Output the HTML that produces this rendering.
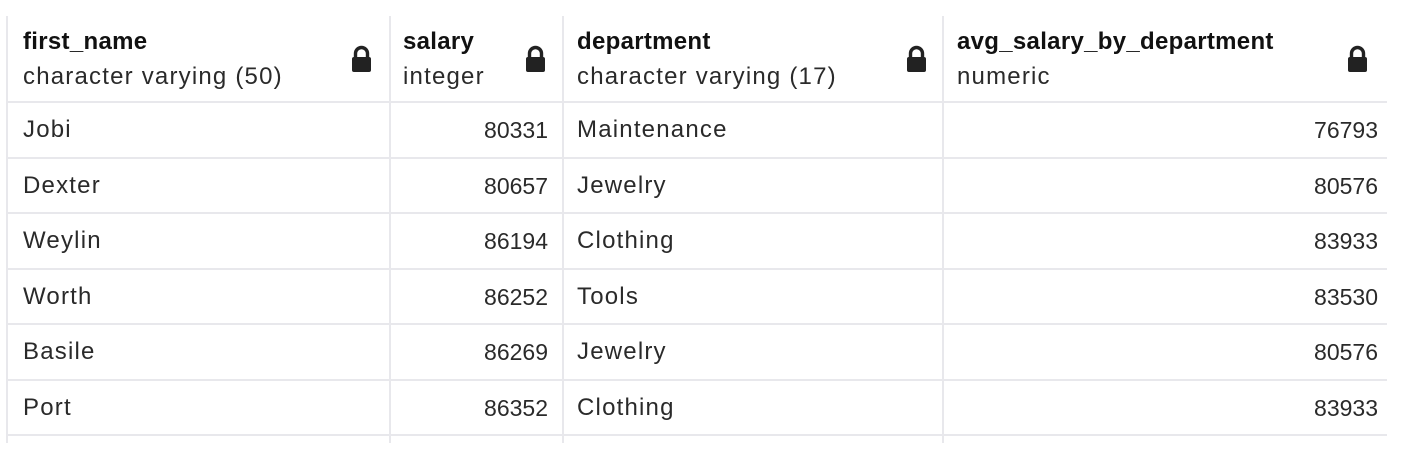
<!DOCTYPE html>
<html><head><meta charset="utf-8"><style>
body{margin:0;background:#fff;width:1408px;height:456px;overflow:hidden;font-family:"Liberation Sans",Arial,sans-serif;color:#222;}
.v{position:absolute;top:16px;height:427px;width:2px;background:#e8e8ec}
.h{position:absolute;left:7px;width:1380px;height:2px;background:#e8e8ec}
.t{position:absolute;font-size:24px;letter-spacing:1.2px;white-space:nowrap;color:#2a2a2a}
.n{font-weight:bold;color:#111;letter-spacing:0.3px}
.r{text-align:right;font-size:23px;letter-spacing:0}
.lock{position:absolute;top:45px;width:23px;height:28px}
</style></head><body>
<div class="v" style="left:6px"></div>
<div class="v" style="left:389px"></div>
<div class="v" style="left:562px"></div>
<div class="v" style="left:942px"></div>
<div class="h" style="top:101px"></div>
<div class="h" style="top:157px"></div>
<div class="h" style="top:212px"></div>
<div class="h" style="top:268px"></div>
<div class="h" style="top:323px"></div>
<div class="h" style="top:379px"></div>
<div class="h" style="top:434px"></div>

<div class="t n" style="left:23px;top:28px">first_name</div>
<div class="t" style="left:23px;top:63px">character varying (50)</div>
<div class="t n" style="left:403px;top:28px">salary</div>
<div class="t" style="left:403px;top:63px">integer</div>
<div class="t n" style="left:577px;top:28px">department</div>
<div class="t" style="left:577px;top:63px">character varying (17)</div>
<div class="t n" style="left:957px;top:28px">avg_salary_by_department</div>
<div class="t" style="left:957px;top:63px">numeric</div>

<svg class="lock" style="left:350px" viewBox="0 0 23 28"><path d="M5.5 13V8.5a6 6 0 0 1 12 0V13" fill="none" stroke="#222" stroke-width="3.4"/><rect x="2" y="12" width="19" height="15" rx="2" fill="#222"/></svg>
<svg class="lock" style="left:524px" viewBox="0 0 23 28"><path d="M5.5 13V8.5a6 6 0 0 1 12 0V13" fill="none" stroke="#222" stroke-width="3.4"/><rect x="2" y="12" width="19" height="15" rx="2" fill="#222"/></svg>
<svg class="lock" style="left:905px" viewBox="0 0 23 28"><path d="M5.5 13V8.5a6 6 0 0 1 12 0V13" fill="none" stroke="#222" stroke-width="3.4"/><rect x="2" y="12" width="19" height="15" rx="2" fill="#222"/></svg>
<svg class="lock" style="left:1346px" viewBox="0 0 23 28"><path d="M5.5 13V8.5a6 6 0 0 1 12 0V13" fill="none" stroke="#222" stroke-width="3.4"/><rect x="2" y="12" width="19" height="15" rx="2" fill="#222"/></svg>

<div class="t" style="left:23px;top:116px">Jobi</div>
<div class="t r" style="right:860px;top:117px">80331</div>
<div class="t" style="left:577px;top:116px">Maintenance</div>
<div class="t r" style="right:30px;top:117px">76793</div>

<div class="t" style="left:23px;top:172px">Dexter</div>
<div class="t r" style="right:860px;top:173px">80657</div>
<div class="t" style="left:577px;top:172px">Jewelry</div>
<div class="t r" style="right:30px;top:173px">80576</div>

<div class="t" style="left:23px;top:227px">Weylin</div>
<div class="t r" style="right:860px;top:228px">86194</div>
<div class="t" style="left:577px;top:227px">Clothing</div>
<div class="t r" style="right:30px;top:228px">83933</div>

<div class="t" style="left:23px;top:283px">Worth</div>
<div class="t r" style="right:860px;top:284px">86252</div>
<div class="t" style="left:577px;top:283px">Tools</div>
<div class="t r" style="right:30px;top:284px">83530</div>

<div class="t" style="left:23px;top:338px">Basile</div>
<div class="t r" style="right:860px;top:339px">86269</div>
<div class="t" style="left:577px;top:338px">Jewelry</div>
<div class="t r" style="right:30px;top:339px">80576</div>

<div class="t" style="left:23px;top:394px">Port</div>
<div class="t r" style="right:860px;top:395px">86352</div>
<div class="t" style="left:577px;top:394px">Clothing</div>
<div class="t r" style="right:30px;top:395px">83933</div>
</body></html>
